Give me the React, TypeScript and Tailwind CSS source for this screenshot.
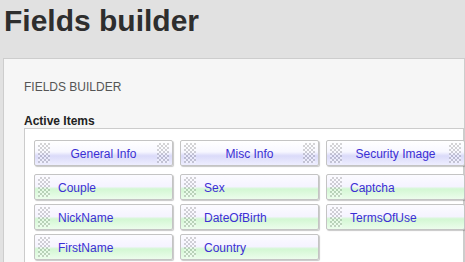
const headers = ["General Info", "Misc Info", "Security Image"];
const fields = ["Couple", "Sex", "Captcha", "NickName", "DateOfBirth", "TermsOfUse", "FirstName", "Country"];

const Grip = () => (
  <span className="block w-[12px] h-[20px] shrink-0 bg-[repeating-conic-gradient(rgba(0,0,0,0.16)_0%_25%,rgba(255,255,255,0.35)_0%_50%)] bg-[length:4px_4px]" />
);

const HeaderItem = ({ label }: { label: string }) => (
  <div className="flex items-center h-[26px] px-[3px] rounded-[2px] border border-[#c4c4c4] shadow-[1px_1px_1px_rgba(0,0,0,0.22)] bg-[linear-gradient(to_bottom,#ffffff_0%,#f7f7ff_45%,#dadaf9_62%,#eeeeff_100%)]">
    <Grip />
    <span className="flex-1 text-center text-[12px] pt-[1px] text-[#3b2fd4]">{label}</span>
    <Grip />
  </div>
);

const FieldItem = ({ label }: { label: string }) => (
  <div className="flex items-center h-[26px] px-[3px] rounded-[2px] border border-[#c4c4c4] shadow-[1px_1px_1px_rgba(0,0,0,0.22)] bg-[linear-gradient(to_bottom,#fbfbff_0%,#f5f3ff_48%,#d3f7d3_58%,#ecfdec_100%)]">
    <Grip />
    <span className="ml-[8px] text-[12px] pt-[1px] text-[#3b2fd4]">{label}</span>
  </div>
);

export default function App() {
  return (
    <div className="h-[262px] overflow-hidden bg-[#e1e1e1] pl-[3px]" style={{ fontFamily: "'Liberation Sans', Arial, sans-serif" }}>
      <h1 className="pl-[1px] pt-[4px] text-[30px] leading-[34px] font-bold text-[#2e2e2e]">Fields builder</h1>
      <div className="mt-[20px] border border-[#cdcdcd] bg-[#f6f6f6] pl-[20px] pt-[21px]">
        <div className="text-[12px] leading-[14px] text-[#555555]">FIELDS BUILDER</div>
        <div className="mt-[20px] text-[12px] leading-[14px] font-bold text-[#222222]">Active Items</div>
        <div className="border border-[#cccccc] bg-white pl-[9px] pt-[11px] pb-[10px]">
          <div className="grid grid-cols-[139px_139px_139px] gap-x-[7px]">
            {headers.map((h) => (
              <HeaderItem key={h} label={h} />
            ))}
          </div>
          <div className="mt-[8px] grid grid-cols-[139px_139px_139px] gap-x-[7px] gap-y-[4px]">
            {fields.map((f) => (
              <FieldItem key={f} label={f} />
            ))}
          </div>
        </div>
      </div>
    </div>
  );
}
